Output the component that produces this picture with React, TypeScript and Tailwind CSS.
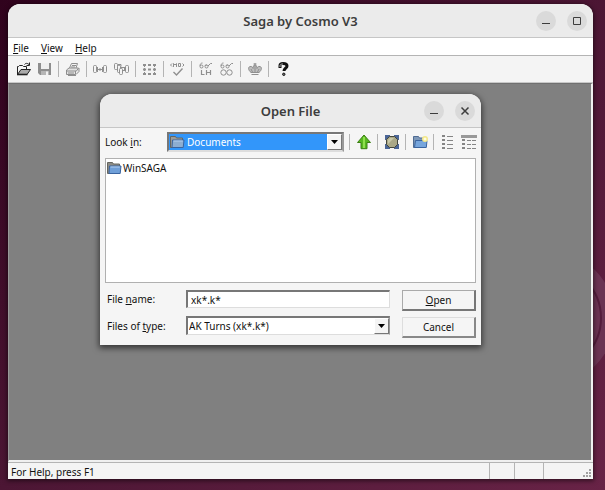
import { ReactNode } from 'react';

const GREY = '#8f8f8f';

function Glyph({ children, color = GREY }: { children: ReactNode; color?: string }) {
  return (
    <svg width="17" height="17" viewBox="0 0 17 17" fill="none" stroke={color} strokeWidth="1" aria-hidden="true">
      {children}
    </svg>
  );
}

function OpenIcon() {
  return (
    <Glyph color="#222">
      <path d="M2.500 13V5.500h1l1-1h3l1 1h3V8" />
      <path d="M2.500 13.500 6 8.500h9.500l-3.500 5z" fill="#aaa" />
      <path d="M2 13.500h10.500" strokeWidth="1.600" />
      <path d="M9.500 3.500c1-1.500 3-1.500 4.500 0M14.500 1.500v3h-3" />
    </Glyph>
  );
}

function SaveIcon() {
  return (
    <Glyph>
      <path d="M2 2h13v12H4l-2-2z" fill="#8e8e8e" stroke="none" />
      <path d="M5 2h8v6H5z" fill="#f0f0f0" stroke="none" />
      <path d="M5 10h8v4H5z" fill="#b5b5b5" stroke="none" />
      <path d="M10 10.500h2V14h-2z" fill="#f0f0f0" stroke="none" />
    </Glyph>
  );
}

function PrintIcon() {
  return (
    <Glyph color="#8e8e8e">
      <path d="M5.500 7 7.500 2.500h6L12 7" fill="#f4f4f4" />
      <path d="M8 4.500h4M7 6h4" />
      <path d="M2.500 9 5 7h9.500l-2 3h-10zM2.500 10v3.500h9V10M12 13.500l3-3V7" fill="#e2e2e2" />
      <path d="M4 12h6" />
      <path d="M4 14.500h8" />
    </Glyph>
  );
}

function LinkIcon() {
  return (
    <Glyph>
      <rect x="1.500" y="4.500" width="3" height="7" rx="1" />
      <rect x="11.500" y="4.500" width="3" height="7" rx="1" />
      <path d="M5 8.500h6M8 7v3M5.500 6v5M10.500 6v5" />
    </Glyph>
  );
}

function MultiLinkIcon() {
  return (
    <Glyph>
      <rect x="1.500" y="2.500" width="3" height="6" rx="1" />
      <rect x="4.500" y="4.500" width="3" height="7" rx="1" fill="#f4f4f4" />
      <rect x="6.500" y="7.500" width="3" height="6" rx="1" fill="#f4f4f4" />
      <rect x="12.500" y="4.500" width="3" height="7" rx="1" />
      <path d="M5 3.500h3v2M8 6.500h4M11.500 6v4M9.500 9.500h3" />
    </Glyph>
  );
}

function GridIcon() {
  return (
    <Glyph>
      <path d="M2 4h3M7 4h3M12 4h3M2 8.500h3M7 8.500h3M12 8.500h3M2 13h3M7 13h3M12 13h3" strokeWidth="2" />
      <path d="M3.500 5v8M13.500 5v8" strokeDasharray="1 1" />
    </Glyph>
  );
}

function CheckIcon() {
  return (
    <Glyph>
      <path d="M3 2.500 1.500 4 3 5.500M4.500 6V2.500L6 4l1.500-1.500V6M9.500 2.500h2v3h-2zM13.500 2.500 15 4l-1.500 1.500" />
      <path d="m4.500 11 3 3 6-6.500" strokeWidth="1.400" />
    </Glyph>
  );
}

function GlassesLetterIcon() {
  return (
    <Glyph>
      <path d="M3 5c0-2 1-3 2.500-3M8 5c0-1 1-1 2-1M11 5l2.500-2.500H15" />
      <circle cx="4.500" cy="5.500" r="1.500" />
      <circle cx="9.500" cy="5.500" r="1.500" />
      <path d="M4.500 9v4.500h3M9.500 9v5M13.500 9v5M9.500 11.500h4" strokeWidth="1.200" />
    </Glyph>
  );
}

function GlassesRingsIcon() {
  return (
    <Glyph>
      <path d="M3 5c0-2 1-3 2.500-3M8 5c0-1 1-1 2-1M11 5l2.500-2.500H15" />
      <circle cx="4.500" cy="5.500" r="1.500" />
      <circle cx="9.500" cy="5.500" r="1.500" />
      <circle cx="5.500" cy="11.500" r="2.700" />
      <circle cx="11.500" cy="11.500" r="2.700" />
    </Glyph>
  );
}

function CrownIcon() {
  return (
    <Glyph>
      <path d="M5 11.500C2 9 2 6 4 5.500s2.500 1 3 2c0-2 .5-3.500 2-3.500s2 1.500 2 3.500c.5-1 1-2.500 3-2s2 3.500-1 6z" fill="#bdbdbd" />
      <path d="M5.500 13.500h7M9 2v10M7.500 3h3M5 8l1.500 3M13 8l-1.500 3" />
    </Glyph>
  );
}

function HelpIcon() {
  return (
    <Glyph color="#111">
      <path d="M6 7V4.500C6 2.500 7.500 2.500 9 2.500s4 .5 4 2.500-3 2.500-3 5" strokeWidth="3" />
      <path d="M6 6V4.500C6.500 3 8 3 9 3" stroke="#bbb" />
      <circle cx="9.800" cy="13.300" r="1.200" fill="#777" />
    </Glyph>
  );
}

function FolderIcon({ pale = false }: { pale?: boolean }) {
  return (
    <svg width="16" height="16" viewBox="0 0 16 16" className="shrink-0" aria-hidden="true">
      <path d="M1.500 13.500v-11h5l1 1.500h6v9.500z" fill={pale ? '#9b9b97' : '#8b8b86'} stroke="#66665f" />
      <path d="M3 13.500 3.500 6h11.500l-.8 7.500z" fill={pale ? '#8dadd0' : '#6f9fd8'} stroke="#3a64a0" />
      <path d="M4.500 7h9.300" stroke="#b5d0f0" />
    </svg>
  );
}

function UpIcon() {
  return (
    <svg width="16" height="16" viewBox="0 0 16 16" aria-hidden="true">
      <path d="M8 1 14.500 8.500H11v6.200H5V8.500H1.500z" fill="#57b81f" stroke="#3b7f12" />
      <path d="M8 3v11" stroke="#8fe04d" strokeWidth="2" />
    </svg>
  );
}

function DesktopIcon() {
  return (
    <svg width="16" height="16" viewBox="0 0 16 16" aria-hidden="true">
      <path d="M2.500 3.500h11v9h-11z" fill="#dcdcd8" stroke="#6a7078" />
      <path d="M1 1h5v5H1zM10 1h5v5h-5zM1 10h5v5H1zM10 10h5v5h-5z" fill="#4a6596" />
      <path d="M5.500 2.500h5l3 3v5l-3 3h-5l-3-3v-5z" fill="#aaa887" stroke="#44473c" />
      <path d="M6 4h4L4 10V6z" fill="#c9c8a8" />
    </svg>
  );
}

function NewFolderIcon() {
  return (
    <svg width="16" height="16" viewBox="0 0 16 16" aria-hidden="true">
      <path d="M1.500 13.500v-11h5l1 1.500h6v9.500z" fill="#7e98b8" stroke="#4f6b92" />
      <path d="M2.500 13.500 3.500 6.500h11.500l-.7 7z" fill="#76a5dc" stroke="#3a64a0" />
      <circle cx="13" cy="5" r="3" fill="#f3e88a" />
      <circle cx="13" cy="5" r="1.500" fill="#fffce0" />
    </svg>
  );
}

function ListIcon() {
  return (
    <svg width="16" height="16" viewBox="0 0 16 16" fill="none" stroke="#858585" aria-hidden="true">
      <path d="M2 2h3M2 6h3M2 10h3M2 14h3" strokeWidth="2" />
      <path d="M7 2.500h6M7 6.500h6M7 10.500h6M7 14.500h6" />
    </svg>
  );
}

function DetailsIcon() {
  return (
    <svg width="16" height="16" viewBox="0 0 16 16" fill="none" stroke="#858585" aria-hidden="true">
      <path d="M0 2.500h16" stroke="#999" strokeWidth="3" />
      <path d="M1 6h3M1 10h3M1 14h3" strokeWidth="2" />
      <path d="M6 6.500h10M6 10.500h10M6 14.500h10" strokeDasharray="4 1" />
    </svg>
  );
}

function Separator() {
  return (
    <div className="flex w-[7px] justify-center">
      <div className="h-4 w-px bg-[#b4b4b4]" />
    </div>
  );
}

function ToolButton({ label, children }: { label: string; children: ReactNode }) {
  return (
    <button type="button" aria-label={label} className="flex h-[21px] w-[21px] items-center justify-center">
      {children}
    </button>
  );
}

function CaptionButton({ label, children }: { label: string; children: ReactNode }) {
  return (
    <button
      type="button"
      aria-label={label}
      className="flex h-5 w-5 items-center justify-center rounded-full bg-[#dadada]"
    >
      <svg width="12" height="12" viewBox="0 0 12 12" fill="none" stroke="#3d3d3d" aria-hidden="true">
        {children}
      </svg>
    </button>
  );
}

function TitleBar({ title, children }: { title: string; children: ReactNode }) {
  return (
    <header className="grid h-[34px] shrink-0 grid-cols-[1fr_auto_1fr] items-center rounded-t-xl border-b border-[#c6c6c6] bg-[#ebebeb] px-[6px]">
      <span />
      <h1 className="text-[13px] leading-4 font-semibold text-[#3d3d3d]">{title}</h1>
      <div className="flex justify-end gap-[11px]">{children}</div>
    </header>
  );
}

function DropArrow() {
  return (
    <span className="pointer-events-none flex w-[15px] shrink-0 items-center justify-center border border-t-white border-r-[#777] border-b-[#777] border-l-white bg-[#f4f4f4]">
      <svg width="7" height="4" viewBox="0 0 7 4" aria-hidden="true">
        <path d="M0 0h7L3.500 4z" fill="#000" />
      </svg>
    </span>
  );
}

function OpenFileDialog() {
  return (
    <section
      role="dialog"
      aria-label="Open File"
      className="absolute top-[10px] left-[91px] w-[381px] rounded-t-xl bg-[#f5f5f5] shadow-[0_2px_6px_1px_rgba(0,0,0,0.6)]"
    >
      <TitleBar title="Open File">
        <CaptionButton label="Minimize">
          <path d="M2 8.500h8" />
        </CaptionButton>
        <CaptionButton label="Close">
          <path d="m2.500 2.500 7 7m0-7-7 7" strokeWidth="1.500" />
        </CaptionButton>
      </TitleBar>

      <div className="flex flex-col px-[5px] pt-[4px] pb-[7px]">
        <div className="flex h-5 items-center">
          <label htmlFor="look-in" className="w-[62px] shrink-0 leading-4">
            Look <u>i</u>n:
          </label>
          <div className="flex h-5 min-w-0 flex-1 border-2 border-t-[#777] border-r-[#999] border-b-[#ddd] border-l-[#777] bg-white">
            <div className="flex min-w-0 flex-1 items-center bg-[#3296fa]">
              <FolderIcon pale />
              <select id="look-in" className="min-w-0 flex-1 appearance-none pl-[2px] leading-4 text-white outline-none">
                <option>Documents</option>
              </select>
            </div>
            <DropArrow />
          </div>
          <div className="-mr-[3px] flex items-center pl-[2px]">
            <Separator />
            <ToolButton label="Up one level"><UpIcon /></ToolButton>
            <Separator />
            <ToolButton label="Desktop"><DesktopIcon /></ToolButton>
            <Separator />
            <ToolButton label="Create new folder"><NewFolderIcon /></ToolButton>
            <Separator />
            <ToolButton label="List"><ListIcon /></ToolButton>
            <ToolButton label="Details"><DetailsIcon /></ToolButton>
          </div>
        </div>

        <ul className="mt-[6px] h-[125px] border border-[#b0b0b0] bg-white py-[1px]">
          <li className="flex h-4 items-center gap-[1px]">
            <FolderIcon />
            <span className="leading-4">WinSAGA</span>
          </li>
        </ul>

        <div className="mt-[7px] flex gap-[12px]">
          <div className="grid min-w-0 flex-1 grid-cols-[79px_1fr] content-start items-center gap-y-[8px] pl-[2px]">
            <label htmlFor="file-name" className="leading-4">
              File <u>n</u>ame:
            </label>
            <input
              id="file-name"
              defaultValue="xk*.k*"
              className="h-[18px] w-full min-w-0 border-t-2 border-r border-b border-l-2 border-t-[#777] border-r-[#ddd] border-b-[#ddd] border-l-[#777] bg-white px-[3px] leading-4 outline-none"
            />
            <label htmlFor="file-type" className="leading-4">
              Files of <u>t</u>ype:
            </label>
            <div className="flex h-[19px] border-t-2 border-r border-b border-l-2 border-t-[#777] border-r-[#999] border-b-[#ddd] border-l-[#777] bg-white">
              <select id="file-type" className="min-w-0 flex-1 appearance-none pl-[1px] leading-4 outline-none">
                <option>AK Turns (xk*.k*)</option>
              </select>
              <DropArrow />
            </div>
          </div>
          <div className="flex w-[74px] flex-col gap-[6px]">
            <button
              type="button"
              className="h-[21px] border-t border-r-2 border-b-2 border-l border-t-[#aaa] border-r-[#777] border-b-[#777] border-l-[#aaa] leading-4"
            >
              <u>O</u>pen
            </button>
            <button
              type="button"
              className="h-[21px] border-t border-r-2 border-b-2 border-l border-t-[#ddd] border-r-[#888] border-b-[#888] border-l-[#ddd] leading-4"
            >
              Cancel
            </button>
          </div>
        </div>
      </div>
    </section>
  );
}

export default function App() {
  return (
    <div className="relative flex min-h-screen flex-col overflow-hidden bg-linear-to-br from-[#30031d] via-[#4c1634] to-[#682346] pt-[4px] pr-[12px] pb-[11px] pl-[8px] font-['Noto_Sans','Open_Sans',sans-serif] text-[10px] text-[#111]">
      {/* wallpaper rings */}
      <svg className="absolute top-[250px] right-[-11px]" width="136" height="136" viewBox="0 0 136 136" fill="none" aria-hidden="true">
        <circle cx="68" cy="68" r="67" fill="#6b3353" />
        <circle cx="68" cy="68" r="53" stroke="#541c3c" strokeWidth="2" />
      </svg>

      <main className="relative flex flex-1 flex-col rounded-t-xl bg-[#f4f4f4] shadow-[0_1px_4px_1px_rgba(0,0,0,0.5)]">
        <TitleBar title="Saga by Cosmo V3">
          <CaptionButton label="Minimize">
            <path d="M2 8.500h8" />
          </CaptionButton>
          <CaptionButton label="Maximize">
            <path d="M2.500 2.500h7v7h-7z" />
          </CaptionButton>
        </TitleBar>

        <nav className="flex h-[18px] items-center gap-[12px] border-b border-[#b4b4b4] bg-white pt-[2px] pl-[5px] leading-4">
          <button type="button"><u>F</u>ile</button>
          <button type="button"><u>V</u>iew</button>
          <button type="button"><u>H</u>elp</button>
        </nav>

        <div className="flex h-[27px] items-center border-b border-[#c8c8c8] pl-[5px]">
          <ToolButton label="Open"><OpenIcon /></ToolButton>
          <ToolButton label="Save"><SaveIcon /></ToolButton>
          <Separator />
          <ToolButton label="Print"><PrintIcon /></ToolButton>
          <Separator />
          <ToolButton label="Link"><LinkIcon /></ToolButton>
          <ToolButton label="Link all"><MultiLinkIcon /></ToolButton>
          <Separator />
          <ToolButton label="Grid"><GridIcon /></ToolButton>
          <Separator />
          <ToolButton label="Check orders"><CheckIcon /></ToolButton>
          <Separator />
          <ToolButton label="View LH"><GlassesLetterIcon /></ToolButton>
          <ToolButton label="View rings"><GlassesRingsIcon /></ToolButton>
          <Separator />
          <ToolButton label="Crown"><CrownIcon /></ToolButton>
          <Separator />
          <ToolButton label="Help"><HelpIcon /></ToolButton>
        </div>

        <div className="relative min-h-[270px] flex-1 border-t border-r-2 border-b-2 border-l border-t-[#707070] border-r-[#f0f0f0] border-b-[#f0f0f0] border-l-[#999] bg-[#808080]">
          <OpenFileDialog />
        </div>

        <footer className="flex h-[17px] items-stretch border-t border-[#b4b4b4]">
          <p className="flex-1 pl-[3px] leading-[18px]">For Help, press F1</p>
          <div className="w-[25px] border-l border-[#b4b4b4]" />
          <div className="w-[29px] border-l border-[#b4b4b4]" />
          <div className="flex w-[50px] items-end justify-end border-l border-[#b4b4b4] p-[2px]">
            <svg width="8" height="8" viewBox="0 0 8 8" fill="#a0a0a0" aria-hidden="true">
              <path d="M6 0h2v2H6zM3 3h2v2H3zM6 3h2v2H6zM0 6h2v2H0zM3 6h2v2H3zM6 6h2v2H6z" />
            </svg>
          </div>
        </footer>
      </main>
    </div>
  );
}
